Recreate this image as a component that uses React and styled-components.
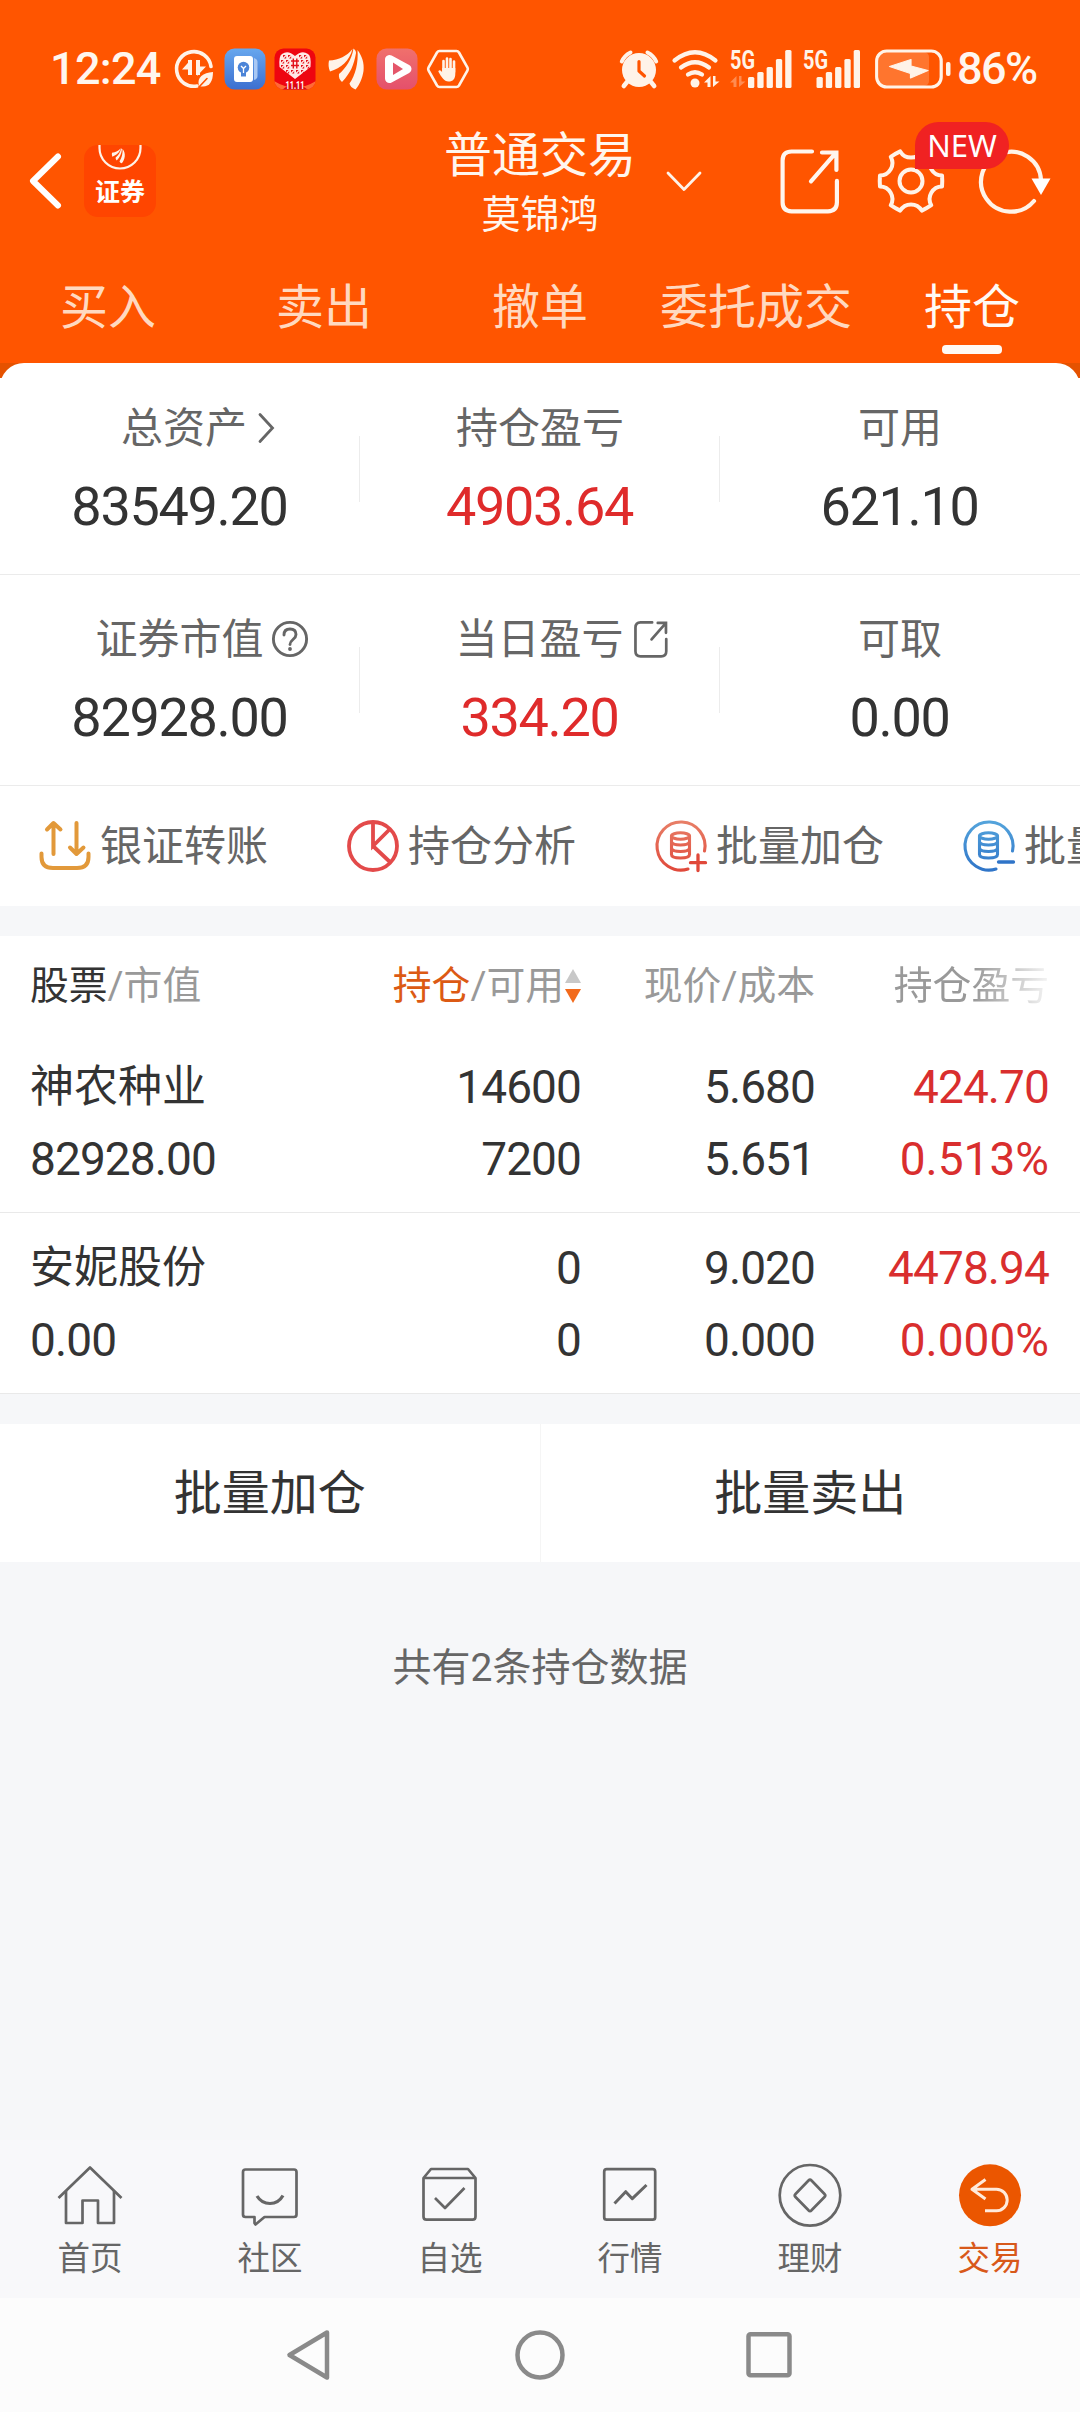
import React from 'react';
import styled, { createGlobalStyle } from 'styled-components';

const GlobalStyle = createGlobalStyle`
    * {
        box-sizing: border-box;
    }
    body {
        margin: 0;
        background: #f6f7f9;
        font-family: Roboto, 'Noto Sans CJK SC', sans-serif;
        color: #333;
    }
    svg {
        display: block;
        flex: none;
        overflow: visible;
    }
`;

const Page = styled.div`
    display: flex;
    flex-direction: column;
    width: 1080px;
    height: 2412px;
    overflow: hidden;
`;

const Top = styled.header`
    background: #ff5500;
    color: #fff6ee;
`;

const StatusBar = styled.div`
    display: flex;
    justify-content: space-between;
    align-items: center;
    height: 125px;
    padding: 12px 43px 0 50px;
`;

const StatusLeft = styled.div`
    display: flex;
    align-items: center;
    gap: 8.8px;
`;

const StatusRight = styled.div`
    display: flex;
    align-items: center;
`;

const Clock = styled.div`
    width: 114px;
    font-size: 45px;
    line-height: 48px;
    font-weight: 500;
    letter-spacing: -0.7px;
    white-space: nowrap;
`;

const Battery = styled.div`
    width: 80px;
    margin-left: 6px;
    font-size: 45px;
    line-height: 48px;
    font-weight: 500;
    letter-spacing: -1.6px;
    white-space: nowrap;
`;

const StatusIcon = styled.div`
    margin-left: ${props => props.gap || 0}px;
`;

const TitleBar = styled.div`
    display: grid;
    grid-template-columns: 1fr 240px 1fr;
    grid-template-rows: 112px;
    align-items: center;
    height: 112px;
`;

const TitleLeft = styled.div`
    display: flex;
    align-items: center;
    gap: 23px;
    padding-left: 29px;
`;

const AppBadge = styled.div`
    display: flex;
    flex-direction: column;
    align-items: center;
    width: 72px;
    height: 72px;
    border-radius: 14px;
    background: #ff4500;
    overflow: hidden;
`;

const AppBadgeText = styled.div`
    padding-top: 1px;
    font-size: 25px;
    line-height: 34px;
    font-weight: 700;
    color: #fff;
`;

const TitleText = styled.div`
    align-self: start;
    padding-top: 1px;
    text-align: center;
`;

const Title = styled.div`
    font-size: 48px;
    line-height: 60px;
`;

const Subtitle = styled.div`
    font-size: 39px;
    line-height: 58px;
`;

const TitleRight = styled.div`
    display: flex;
    align-items: center;
    padding-left: 6px;
`;

const Spacer = styled.div`
    width: ${props => props.w}px;
`;

const GearButton = styled.div`
    position: relative;
    margin: 0 35px 0 37px;
`;

const NewTag = styled.span`
    position: absolute;
    left: 38px;
    top: -25px;
    width: 94px;
    height: 47px;
    border-radius: 24px 24px 24px 0;
    background: #f02222;
    color: #fff;
    font-family: 'Noto Sans', sans-serif;
    font-size: 31px;
    line-height: 47px;
    text-align: center;
    z-index: 1;
`;

const Tabs = styled.nav`
    display: flex;
    height: 126px;
`;

const Tab = styled.div`
    display: flex;
    flex-direction: column;
    align-items: center;
    flex: 0 0 216px;
    padding-top: 41px;
    font-size: 48px;
    line-height: 60px;
    color: ${props => props.active ? '#fffaf5' : '#ffd9c0'};
    &::after {
        content: '';
        width: 60px;
        height: 9px;
        margin-top: 7px;
        border-radius: 4px;
        background: ${props => props.active ? '#fffaf5' : 'transparent'};
    }
`;

const SheetWrap = styled.div`
    background: linear-gradient(#e55200 0, #e55200 15px, #fff 15px);
`;

const Sheet = styled.section`
    padding-top: 1px;
    border-radius: 24px 24px 0 0;
    background: #fff;
    overflow: hidden;
`;

const AssetRow = styled.div`
    display: flex;
    height: 211px;
    border-bottom: 1px solid #ebebeb;
`;

const Asset = styled.div`
    flex: 1;
    padding-top: 35px;
    text-align: center;
    background: ${props => props.divided ? 'linear-gradient(#ececec, #ececec) no-repeat right 0 top 72px / 1px 66px' : 'none'};
`;

const AssetLabel = styled.div`
    display: flex;
    justify-content: center;
    align-items: center;
    height: 60px;
    font-size: 42px;
    line-height: 60px;
    color: #666;
    svg {
        margin: -2px ${props => props.pull || 0}px 0 ${props => props.iconGap || 10}px;
    }
`;

const AssetValue = styled.div`
    margin-top: 13px;
    padding-right: 1px;
    font-size: 54px;
    line-height: 70px;
    letter-spacing: -1.3px;
    color: ${props => props.red ? '#df2b2b' : '#333'};
`;

const Tools = styled.div`
    display: flex;
    height: 120px;
    padding-left: 39px;
    overflow: hidden;
`;

const Tool = styled.div`
    display: flex;
    align-items: center;
    flex: 0 0 308px;
    gap: 9px;
    font-size: 42px;
    line-height: 60px;
    color: #666;
    white-space: nowrap;
`;

const ToolLabel = styled.span`
    padding-top: 2px;
`;

const Holdings = styled.section`
    margin-top: 30px;
    background: #fff;
`;

const HoldingGrid = styled.div`
    display: grid;
    grid-template-columns: 1fr 234px 234px 234px;
    padding: 0 31px 0 30px;
    text-align: right;
`;

const HeadRow = styled(HoldingGrid)`
    align-items: center;
    height: 96px;
    padding-top: 3px;
    font-size: 38.8px;
    line-height: 60px;
    color: #999;
`;

const HeadCell = styled.div`
    display: flex;
    align-items: center;
    justify-content: ${props => props.left ? 'flex-start' : 'flex-end'};
    white-space: nowrap;
    svg {
        margin: 1px 0 0 1px;
    }
`;

const FadedCell = styled(HeadCell)`
    mask-image: linear-gradient(to right, #000 68%, rgba(0, 0, 0, 0.1) 100%);
`;

const Strong = styled.span`
    color: ${props => props.active ? '#dc5a14' : '#333'};
`;

const HoldingRow = styled(HoldingGrid)`
    height: 181px;
    padding-top: 19px;
    border-bottom: 1px solid #e9e9e9;
`;

const Cell = styled.div`
    font-size: 46px;
    line-height: 72px;
    letter-spacing: -0.9px;
    text-align: ${props => props.left ? 'left' : 'right'};
    color: ${props => props.red ? '#d92e2e' : '#333'};
`;

const StockName = styled.div`
    font-size: 44px;
    letter-spacing: 0;
`;

const Rate = styled.div`
    letter-spacing: 0;
`;

const Actions = styled.div`
    display: flex;
    margin-top: 30px;
    background: #fff;
`;

const Action = styled.button`
    flex: 1;
    height: 138px;
    padding: 2px 0 0;
    border: 0;
    border-right: ${props => props.divided ? '1px solid #f5f5f5' : '0'};
    background: none;
    font-family: inherit;
    font-size: 48px;
    line-height: 136px;
    color: #333;
`;

const Summary = styled.div`
    flex: 1;
    padding-top: 76px;
    text-align: center;
    font-size: 39px;
    line-height: 60px;
    color: #666;
`;

const TabBar = styled.nav`
    display: flex;
    height: 158px;
    padding-top: 23px;
    background: #f8f8fa;
`;

const TabBarItem = styled.div`
    display: flex;
    flex: 1;
    flex-direction: column;
    align-items: center;
    gap: 12px;
    font-size: 32.5px;
    line-height: 40px;
    color: ${props => props.active ? '#d8591a' : '#666'};
`;

const SystemNav = styled.div`
    display: flex;
    justify-content: center;
    align-items: center;
    gap: 174px;
    height: 114px;
    background: #fcfcfc;
`;

const CREAM = '#fff3e8';

const DataSaverIcon = () => (
    <svg width="42" height="42" viewBox="0 0 42 42" fill="none" stroke={CREAM} strokeWidth="3.6" strokeLinecap="round">
        <path d="M38 18.500A17.300 17.300 0 1 0 24 38" />
        <path d="M17 12V27M25 12V27" strokeWidth="4" strokeLinecap="butt" />
        <path d="M9 21.500L18 11.500V21.500ZM25 18.500H33L24 28Z" fill={CREAM} stroke="none" />
        <path d="M26 38C23.500 29 30 25 40 24C40 35 35 40.500 26 38Z" fill={CREAM} stroke="none" />
        <path d="M26 39L34 30.500" stroke="#ff5500" strokeWidth="1.600" />
    </svg>
);

const NotebookIcon = () => (
    <svg width="42" height="42" viewBox="0 0 42 42">
        <defs>
            <linearGradient id="noteBg" x1="0" y1="0" x2="0" y2="1">
                <stop offset="0" stopColor="#67a7ee" />
                <stop offset="1" stopColor="#3c6fd0" />
            </linearGradient>
        </defs>
        <rect x="0.500" y="0.500" width="41" height="41" rx="10" fill="url(#noteBg)" />
        <path d="M30 10Q33.500 11 33.500 14V28Q33.500 31 30 32Z" fill="#a9c8f4" />
        <rect x="10" y="8" width="19" height="26" rx="3" fill="#fff" />
        <circle cx="19.500" cy="19.500" r="5.800" fill="#4b84d8" />
        <path d="M17 23H22V28.500H17Z" fill="#4b84d8" />
        <path d="M17 18L19.500 20.500L22 18M19.500 20.500V25" fill="none" stroke="#fff" strokeWidth="1.300" />
    </svg>
);

const HEART_CELLS = [
    [8, 6], [13, 6], [24, 6], [29, 6],
    [6, 11], [11, 11], [26, 11], [31, 11],
    [6, 16], [11, 16], [26, 16], [31, 16],
    [11, 21], [16, 21], [21, 21], [26, 21],
];

const HeartIcon = () => (
    <svg width="42" height="42" viewBox="0 0 42 42">
        <defs>
            <clipPath id="heartTile"><rect x="0.500" y="0.500" width="41" height="41" rx="9" /></clipPath>
        </defs>
        <g clipPath="url(#heartTile)">
            <rect width="42" height="42" fill="#ee0510" />
            <path d="M0 33Q21 46 42 33V42H0Z" fill="#ff6a35" />
            <path d="M8 42Q21 30 34 42Z" fill="#d80813" />
            <path d="M21 8Q14 1.500 8 6Q4.500 8 5.500 19L21 31L36.500 19Q37.500 8 34 6Q28 1.500 21 8Z" fill="#ffe9e6" />
            {HEART_CELLS.map(([x, y]) => (
                <path key={`${x}-${y}`} d={`M${x + 1} ${y + 1}h2.600l-2.600 2.600zM${x + 4.200} ${y + 2.200}v2.200h-2.200z`} fill="#e2101a" />
            ))}
            <path d="M17 13h8M17 17.500h8M19.300 10.500v10M22.800 10.500v10" stroke="#e2101a" strokeWidth="1.400" />
        </g>
        <text x="11.500" y="40.500" fontSize="11" fontWeight="700" textLength="19" lengthAdjust="spacingAndGlyphs" fill="#fff">11.11</text>
    </svg>
);

const WingsShape = () => (
    <g fill={CREAM}>
        <path d="M4 12.500C14 12 22 8 27.500 1C24.500 13 16 20 5 23.500C3.500 20 3.200 16 4 12.500Z" />
        <path d="M28.500 0.500C30.500 2 31 3.500 31 5C29 17 25.500 25 17 34C14.500 32 13.500 29 14 26C21 20 26.500 12 28.500 0.500Z" />
        <path d="M32.500 2C37 8 39.500 15 38.500 23C37.500 30 34.500 37 30.500 41.500C27 40 25 38 24.500 35.500C30.500 27 33.500 15 32.500 2Z" />
    </g>
);

const WingsIcon = () => (
    <svg width="42" height="42" viewBox="0 0 42 42"><WingsShape /></svg>
);

const PlayIcon = () => (
    <svg width="42" height="42" viewBox="0 0 42 42">
        <defs>
            <linearGradient id="playBg" x1="0" y1="0" x2="0" y2="1">
                <stop offset="0" stopColor="#f0706c" />
                <stop offset="1" stopColor="#e4506c" />
            </linearGradient>
        </defs>
        <rect x="0.500" y="0.500" width="41" height="41" rx="10" fill="url(#playBg)" />
        <path d="M13.500 11.500V30.500L31 21Z" fill="#fff" stroke="#fff" strokeWidth="9" strokeLinejoin="round" />
        <path d="M17 14.500V27L27 21Z" fill="#e4566a" />
    </svg>
);

const HandIcon = () => (
    <svg width="42" height="42" viewBox="0 0 42 42" fill="none">
        <path d="M12.500 3H29.500Q31 3 32 4.500L40.500 19.500Q41.200 21 40.500 22.500L32 37.500Q31 39 29.500 39H12.500Q11 39 10 37.500L1.500 22.500Q0.800 21 1.500 19.500L10 4.500Q11 3 12.500 3Z" stroke={CREAM} strokeWidth="2.600" />
        <path d="M16.500 24V13M20 22V10.500M23.500 22V11M27 24V13.500" stroke={CREAM} strokeWidth="2.600" strokeLinecap="round" />
        <path d="M15.200 20H28.300V25.500C28.300 31 26 33.500 21.500 33.500C17 33.500 14.500 29 11.300 23.500C12 21.500 14 22 15.200 24.500Z" fill={CREAM} />
    </svg>
);

const AlarmIcon = () => (
    <svg width="38" height="38" viewBox="0 0 38 38" fill="none" stroke={CREAM}>
        <circle cx="19" cy="20" r="17" fill={CREAM} stroke="none" />
        <path d="M1.800 11.500Q4.500 5.500 10.500 2.500M36.200 11.500Q33.500 5.500 27.500 2.500" strokeWidth="4" strokeLinecap="round" />
        <path d="M7 32L3.800 36M31 32L34.200 36" strokeWidth="4.500" strokeLinecap="round" />
        <path d="M19 11.500V21L24.500 26" stroke="#ff5500" strokeWidth="3.200" strokeLinecap="round" strokeLinejoin="round" />
    </svg>
);

const WifiIcon = () => (
    <svg width="48" height="38" viewBox="0 0 48 38" fill="none" stroke={CREAM} strokeWidth="4.200" strokeLinecap="round">
        <path d="M2.500 10.500Q23 -6 43.500 10.500" />
        <path d="M9 17.500Q23 7 37 17.500" />
        <path d="M16 24.500Q23 20 30 24.500" />
        <circle cx="23" cy="33" r="4.500" fill={CREAM} stroke="none" />
        <path d="M32 32.500L38.500 26V37H35.500V32.500ZM41 26H43.500V31.500H47.500L41 37Z" fill={CREAM} stroke="none" />
    </svg>
);

const BAR_HEIGHTS = [11, 16, 21, 29, 38];

const SignalIcon = ({ width, barsAt, traffic }) => (
    <svg width={width} height="38" viewBox={`0 0 ${width} 38`} fill={CREAM}>
        <text x="0" y="18.500" fontSize="25" fontWeight="700" textLength="25" lengthAdjust="spacingAndGlyphs">5G</text>
        {BAR_HEIGHTS.map((h, i) => (
            <rect key={h} x={barsAt + i * 9.300} y={38 - h} width="6.300" height={h} rx="1.500" />
        ))}
        {traffic && <path d="M0 32.500L6.500 26V37H3.500V32.500ZM9 26H11.500V31.500H15.500L9 37Z" opacity="0.35" />}
    </svg>
);

const BatteryIcon = () => (
    <svg width="76" height="40" viewBox="0 0 76 40" fill="none">
        <rect x="4" y="3" width="50" height="34" rx="5" fill={CREAM} opacity="0.2" />
        <rect x="1.700" y="2" width="64.500" height="36" rx="10" stroke={CREAM} strokeWidth="3.200" />
        <rect x="71" y="13" width="4.500" height="14" rx="2" fill={CREAM} />
        <path d="M14.500 17L30 16L36.500 10.500V16.500L53 21.500L37 29.500V23.500L31 24.500Z" fill="none" />
        <path d="M14.500 17.500L36 10.500V17L53 21.500L35.500 29V24.500Z" fill={CREAM} stroke={CREAM} strokeWidth="1.200" strokeLinejoin="round" />
    </svg>
);

const BackIcon = () => (
    <svg width="32" height="56" viewBox="0 0 32 56" fill="none" stroke="#fff" strokeWidth="6" strokeLinecap="round" strokeLinejoin="round">
        <path d="M29 3.500L4 28L29 52.500" />
    </svg>
);

const BadgeArc = () => (
    <svg width="72" height="30" viewBox="0 0 72 30" fill="none">
        <path d="M15.500 0V3A20.500 20.500 0 0 0 56.500 3V0" stroke={CREAM} strokeWidth="2.200" />
        <g transform="translate(26.500 3) scale(0.370)"><WingsShape /></g>
    </svg>
);

const ChevronDownIcon = () => (
    <svg width="36" height="22" viewBox="0 0 36 22" fill="none" stroke={CREAM} strokeWidth="2.800" strokeLinecap="round" strokeLinejoin="round">
        <path d="M2 3L18 19.500L34 3" />
    </svg>
);

const ShareIcon = ({ size, strokeWidth, radius = 9 }) => (
    <svg width={size} height={size * 1.08} viewBox="0 0 60 65" fill="none" stroke="currentColor" strokeWidth={strokeWidth} strokeLinecap="round">
        <path d={`M32 2.500H${2.500 + radius}Q2.500 2.500 2.500 ${2.500 + radius}V${62.500 - radius}Q2.500 62.500 ${2.500 + radius} 62.500H${57 - radius}Q57 62.500 57 ${62.500 - radius}V32`} />
        <path d="M42 3.500H56.500V21M55 5L31 32.500" />
    </svg>
);

// six lobes with flat tips and round notches between them
const gearPath = (() => {
    const point = deg => {
        const a = (deg * Math.PI) / 180;
        return `${(34 + 31.5 * Math.cos(a)).toFixed(2)} ${(34 + 31.5 * Math.sin(a)).toFixed(2)}`;
    };
    let d = `M${point(-10)}`;
    for (let k = 0; k < 6; k++) {
        d += `Q${point(k * 60)} ${point(k * 60 + 10)}`;
        d += `A12.5 12.5 0 0 0 ${point(k * 60 + 50)}`;
    }
    return `${d}Z`;
})();

const GearIcon = () => (
    <svg width="68" height="68" viewBox="0 0 68 68" fill="none" stroke={CREAM} strokeWidth="4" strokeLinejoin="round">
        <path d={gearPath} />
        <circle cx="34" cy="34" r="11.500" />
    </svg>
);

const RefreshIcon = () => (
    <svg width="72" height="68" viewBox="0 0 72 68" fill="none" stroke={CREAM} strokeWidth="4.200">
        <path d="M61 33A30 30 0 1 0 54 54" strokeLinecap="round" />
        <path d="M51.500 31.500H70.500L61 48Z" fill="#fff" stroke="none" />
    </svg>
);

const ChevronRightIcon = () => (
    <svg width="17" height="32" viewBox="0 0 17 32" fill="none" stroke="#666" strokeWidth="2.800" strokeLinecap="round">
        <path d="M2 2.500L14.500 16L2 29.500" />
    </svg>
);

const HelpIcon = () => (
    <svg width="36" height="36" viewBox="0 0 36 36" fill="none" stroke="#666" strokeWidth="2.900" strokeLinecap="round">
        <circle cx="18" cy="18" r="16.600" />
        <path d="M12 14Q12 8 18 8Q24 8 24 13.500Q24 16 21 18.500Q18 21 18 23.500" />
        <circle cx="18" cy="28" r="1" fill="#666" strokeWidth="1.800" />
    </svg>
);

const TransferIcon = () => (
    <svg width="52" height="52" viewBox="0 0 52 52" fill="none" stroke="#e2993a" strokeWidth="4" strokeLinecap="round" strokeLinejoin="round">
        <path d="M14.500 34V4M8 9.500L14.500 3L21.500 9.500" />
        <path d="M37.500 3V33M31 27.500L37.500 34L44.500 27.500" />
        <path d="M2.500 33.500V37Q2.500 48 14 48H38Q49.500 48 49.500 37V33.500" />
    </svg>
);

const PieIcon = () => (
    <svg width="52" height="52" viewBox="0 0 52 52" fill="none" stroke="#e34a4a" strokeWidth="3.800">
        <circle cx="26" cy="26" r="24" />
        <path d="M26 2V26L43 9M26 26L43 42" />
    </svg>
);

const StackIcon = ({ id, from, to, plus }) => (
    <svg width="52" height="52" viewBox="0 0 52 52" fill="none" stroke={`url(#${id})`} strokeWidth="3.100" strokeLinecap="round">
        <defs>
            <linearGradient id={id} gradientUnits="userSpaceOnUse" x1="0" y1="0" x2="0" y2="52">
                <stop offset="0" stopColor={from} />
                <stop offset="1" stopColor={to} />
            </linearGradient>
        </defs>
        <path d="M49.500 31A24 24 0 1 0 33 49" />
        <ellipse cx="25.500" cy="16" rx="9" ry="3.200" />
        <path d="M16.500 16V34.500Q16.500 38 25.500 38Q34.500 38 34.500 34.500V16" />
        <path d="M16.500 22Q17.500 25 25.500 25Q33.500 25 34.500 22M16.500 28.500Q17.500 31.500 25.500 31.500Q33.500 31.500 34.500 28.500" />
        <path d={plus ? 'M35.500 42.700H50.500M43 35V50.500' : 'M35.500 42H50.500'} stroke={to} strokeWidth="3.300" />
    </svg>
);

const SortIcon = () => (
    <svg width="16" height="36" viewBox="0 0 16 36">
        <path d="M8 1L16 15H0Z" fill="#c8c8c8" />
        <path d="M0 21H16L8 35Z" fill="#f26a1b" />
    </svg>
);

const TabSvg = ({ children }) => (
    <svg width="64" height="64" viewBox="0 0 64 64" fill="none" stroke="#666" strokeWidth="2.700" strokeLinejoin="round">
        {children}
    </svg>
);

const HomeIcon = () => (
    <TabSvg>
        <path d="M0.500 35L32 4.500L63.500 35" />
        <path d="M8 28V60H24.500V37.500H40V60H56V28" />
    </TabSvg>
);

const ChatIcon = () => (
    <TabSvg>
        <path d="M7.500 6.500H56Q58.500 6.500 58.500 9V51.500Q58.500 54 56 54H26.500L17.500 61.500L16.500 60V54H7.500Q5 54 5 51.500V9Q5 6.500 7.500 6.500Z" />
        <path d="M19 33Q23.500 40.500 32 40.500Q40.500 40.500 45 32.500" strokeWidth="3.200" />
    </TabSvg>
);

const WatchlistIcon = () => (
    <TabSvg>
        <path d="M5.500 15L13 6H50L57.500 15V53.500Q57.500 56.700 54.500 56.700H8.500Q5.500 56.700 5.500 53.500ZM5.500 15H57.500" />
        <path d="M17 35L27 45L46.500 25" />
    </TabSvg>
);

const MarketIcon = () => (
    <TabSvg>
        <rect x="6.200" y="6.200" width="51" height="50.500" rx="2.500" />
        <path d="M16.500 40.500L27.700 28.700L34.300 35.700L48.500 22" strokeWidth="3" />
    </TabSvg>
);

const FinanceIcon = () => (
    <TabSvg>
        <circle cx="32" cy="32.300" r="30.300" />
        <path d="M30.500 17.500Q32 16 33.500 17.500L46.500 31Q48 32.500 46.500 34L33.500 47.300Q32 49 30.500 47.300L17.500 34Q16 32.500 17.500 31Z" />
    </TabSvg>
);

const TradeIcon = () => (
    <TabSvg>
        <circle cx="32" cy="32.300" r="31" fill="#eb5600" stroke="none" />
        <path d="M27.500 16.500L14 26.300L27.500 36M14.500 26.300H38.500A10.700 10.700 0 0 1 38.500 47.700H27" stroke="#ffeadb" strokeWidth="3" />
    </TabSvg>
);

const TOP_TABS = ['买入', '卖出', '撤单', '委托成交', '持仓'];

const TOOLS = [
    { label: '银证转账', icon: <TransferIcon /> },
    { label: '持仓分析', icon: <PieIcon /> },
    { label: '批量加仓', icon: <StackIcon id="stackAdd" from="#e88068" to="#e0483a" plus /> },
    { label: '批量卖出', icon: <StackIcon id="stackSell" from="#55a5dc" to="#2f74c8" /> },
];

const HOLDINGS = [
    { name: '神农种业', value: '82928.00', held: '14600', usable: '7200', price: '5.680', cost: '5.651', profit: '424.70', rate: '0.513%' },
    { name: '安妮股份', value: '0.00', held: '0', usable: '0', price: '9.020', cost: '0.000', profit: '4478.94', rate: '0.000%' },
];

const BOTTOM_TABS = [
    { label: '首页', icon: <HomeIcon /> },
    { label: '社区', icon: <ChatIcon /> },
    { label: '自选', icon: <WatchlistIcon /> },
    { label: '行情', icon: <MarketIcon /> },
    { label: '理财', icon: <FinanceIcon /> },
    { label: '交易', icon: <TradeIcon />, active: true },
];

class App extends React.Component {
    Holding(item) {
        return (
            <HoldingRow key={item.name}>
                <Cell left>
                    <StockName>{item.name}</StockName>
                    <div>{item.value}</div>
                </Cell>
                <Cell>
                    <div>{item.held}</div>
                    <div>{item.usable}</div>
                </Cell>
                <Cell>
                    <div>{item.price}</div>
                    <div>{item.cost}</div>
                </Cell>
                <Cell red>
                    <div>{item.profit}</div>
                    <Rate>{item.rate}</Rate>
                </Cell>
            </HoldingRow>
        )
    }

    render() {
        return (
            <Page>
                <GlobalStyle />
                <Top>
                    <StatusBar>
                        <StatusLeft>
                            <Clock>12:24</Clock>
                            <DataSaverIcon />
                            <NotebookIcon />
                            <HeartIcon />
                            <WingsIcon />
                            <PlayIcon />
                            <HandIcon />
                        </StatusLeft>
                        <StatusRight>
                            <StatusIcon><AlarmIcon /></StatusIcon>
                            <StatusIcon gap={14}><WifiIcon /></StatusIcon>
                            <StatusIcon gap={10}><SignalIcon width={62} barsAt={18} traffic /></StatusIcon>
                            <StatusIcon gap={11}><SignalIcon width={57} barsAt={13.500} /></StatusIcon>
                            <StatusIcon gap={15}><BatteryIcon /></StatusIcon>
                            <Battery>86%</Battery>
                        </StatusRight>
                    </StatusBar>
                    <TitleBar>
                        <TitleLeft>
                            <BackIcon />
                            <AppBadge>
                                <BadgeArc />
                                <AppBadgeText>证券</AppBadgeText>
                            </AppBadge>
                        </TitleLeft>
                        <TitleText>
                            <Title>普通交易</Title>
                            <Subtitle>莫锦鸿</Subtitle>
                        </TitleText>
                        <TitleRight>
                            <ChevronDownIcon />
                            <Spacer w={78} />
                            <ShareIcon size={60} strokeWidth={4.200} />
                            <GearButton>
                                <GearIcon />
                                <NewTag>NEW</NewTag>
                            </GearButton>
                            <RefreshIcon />
                        </TitleRight>
                    </TitleBar>
                    <Tabs>
                        {TOP_TABS.map(name => <Tab key={name} active={name === '持仓'}>{name}</Tab>)}
                    </Tabs>
                </Top>
                <SheetWrap>
                    <Sheet>
                        <AssetRow>
                            <Asset divided>
                                <AssetLabel iconGap={11} pull={-36}>总资产<ChevronRightIcon /></AssetLabel>
                                <AssetValue>83549.20</AssetValue>
                            </Asset>
                            <Asset divided>
                                <AssetLabel>持仓盈亏</AssetLabel>
                                <AssetValue red>4903.64</AssetValue>
                            </Asset>
                            <Asset>
                                <AssetLabel>可用</AssetLabel>
                                <AssetValue>621.10</AssetValue>
                            </Asset>
                        </AssetRow>
                        <AssetRow>
                            <Asset divided>
                                <AssetLabel iconGap={8} pull={-43}>证券市值<HelpIcon /></AssetLabel>
                                <AssetValue>82928.00</AssetValue>
                            </Asset>
                            <Asset divided>
                                <AssetLabel iconGap={10} pull={-43}>当日盈亏<ShareIcon size={34} strokeWidth={4.800} /></AssetLabel>
                                <AssetValue red>334.20</AssetValue>
                            </Asset>
                            <Asset>
                                <AssetLabel>可取</AssetLabel>
                                <AssetValue>0.00</AssetValue>
                            </Asset>
                        </AssetRow>
                        <Tools>
                            {TOOLS.map((tool, i) => (
                                <Tool key={i}>
                                    {tool.icon}
                                    <ToolLabel>{tool.label}</ToolLabel>
                                </Tool>
                            ))}
                        </Tools>
                    </Sheet>
                </SheetWrap>
                <Holdings>
                    <HeadRow>
                        <HeadCell left><Strong>股票</Strong>/市值</HeadCell>
                        <HeadCell><Strong active>持仓</Strong>/可用<SortIcon /></HeadCell>
                        <HeadCell>现价/成本</HeadCell>
                        <FadedCell>持仓盈亏</FadedCell>
                    </HeadRow>
                    {HOLDINGS.map(this.Holding, this)}
                </Holdings>
                <Actions>
                    <Action divided>批量加仓</Action>
                    <Action>批量卖出</Action>
                </Actions>
                <Summary>共有2条持仓数据</Summary>
                <TabBar>
                    {BOTTOM_TABS.map(tab => (
                        <TabBarItem key={tab.label} active={tab.active}>
                            {tab.icon}
                            {tab.label}
                        </TabBarItem>
                    ))}
                </TabBar>
                <SystemNav>
                    <svg width="56" height="56" viewBox="0 0 56 56" fill="none" stroke="#8a8a8a" strokeWidth="4.500" strokeLinejoin="round">
                        <path d="M45 5.500L7.500 28L45 50.500Z" />
                    </svg>
                    <svg width="56" height="56" viewBox="0 0 56 56" fill="none" stroke="#8a8a8a" strokeWidth="4.500">
                        <circle cx="28" cy="28" r="22.500" />
                    </svg>
                    <svg width="56" height="56" viewBox="0 0 56 56" fill="none" stroke="#8a8a8a" strokeWidth="4.500">
                        <rect x="6.500" y="7.300" width="41" height="41" rx="2" />
                    </svg>
                </SystemNav>
            </Page>
        )
    }
}

export default App;
